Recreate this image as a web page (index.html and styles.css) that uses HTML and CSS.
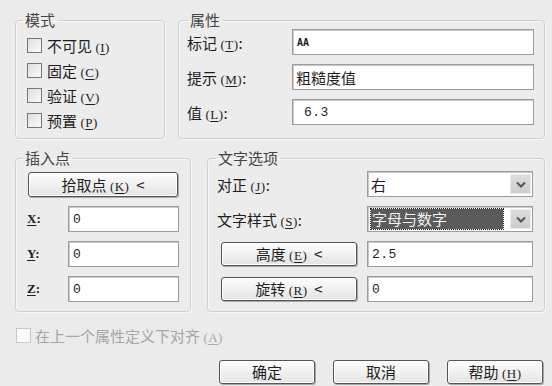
FILE: index.html
```html
<!DOCTYPE html>
<html lang="zh-CN">
<head>
<meta charset="utf-8">
<title>属性定义</title>
<link rel="stylesheet" href="styles.css">
</head>
<body>
<div class="dlg">
  <div class="row top">
    <fieldset class="grp mode">
      <legend>模式</legend>
      <div class="chk"><span class="box"></span><span class="t">不可见 <span class="mn">(<u>I</u>)</span></span></div>
      <div class="chk"><span class="box"></span><span class="t">固定 <span class="mn">(<u>C</u>)</span></span></div>
      <div class="chk"><span class="box"></span><span class="t">验证 <span class="mn">(<u>V</u>)</span></span></div>
      <div class="chk"><span class="box"></span><span class="t">预置 <span class="mn">(<u>P</u>)</span></span></div>
    </fieldset>
    <fieldset class="grp attr">
      <legend>属性</legend>
      <div class="frow"><span class="lbl">标记 <span class="mn">(<u>T</u>)</span>:</span><div class="inp aa">AA</div></div>
      <div class="frow"><span class="lbl">提示 <span class="mn">(<u>M</u>)</span>:</span><div class="inp">粗糙度值</div></div>
      <div class="frow"><span class="lbl">值 <span class="mn">(<u>L</u>)</span>:</span><div class="inp num ind">6.3</div></div>
    </fieldset>
  </div>
  <div class="row mid">
    <fieldset class="grp ins">
      <legend>插入点</legend>
      <div class="btn pick">拾取点 <span class="mn">(<u>K</u>)</span>&nbsp; &lt;</div>
      <div class="frow"><span class="lbl xyz"><u>X</u>:</span><div class="inp num">0</div></div>
      <div class="frow"><span class="lbl xyz"><u>Y</u>:</span><div class="inp num">0</div></div>
      <div class="frow"><span class="lbl xyz"><u>Z</u>:</span><div class="inp num">0</div></div>
    </fieldset>
    <fieldset class="grp txt">
      <legend>文字选项</legend>
      <div class="frow"><span class="lbl wide">对正 <span class="mn">(<u>J</u>)</span>:</span>
        <div class="inp sel"><span class="val">右</span><span class="arr"><svg width="10" height="7" viewBox="0 0 10 7"><path d="M1 1.5 L5 5.5 L9 1.5" fill="none" stroke="#555" stroke-width="2"/></svg></span></div></div>
      <div class="frow"><span class="lbl wide">文字样式 <span class="mn">(<u>S</u>)</span>:</span>
        <div class="inp sel"><span class="val hl">字母与数字</span><span class="arr"><svg width="10" height="7" viewBox="0 0 10 7"><path d="M1 1.5 L5 5.5 L9 1.5" fill="none" stroke="#555" stroke-width="2"/></svg></span></div></div>
      <div class="frow"><div class="lbl wide"><div class="btn sbtn">高度 <span class="mn">(<u>E</u>)</span>&nbsp; &lt;</div></div><div class="inp num">2.5</div></div>
      <div class="frow"><div class="lbl wide"><div class="btn sbtn">旋转 <span class="mn">(<u>R</u>)</span>&nbsp; &lt;</div></div><div class="inp num">0</div></div>
    </fieldset>
  </div>
  <div class="align"><span class="box dis"></span><span class="t">在上一个属性定义下对齐 <span class="mn">(<u>A</u>)</span></span></div>
  <div class="btns">
    <div class="btn act">确定</div>
    <div class="btn act">取消</div>
    <div class="btn act">帮助 <span class="mn">(<u>H</u>)</span></div>
  </div>
</div>
</body>
</html>
```
FILE: styles.css
```css
html, body {
  margin: 0;
  padding: 0;
  background: #ebebeb;
}
body {
  width: 552px;
  height: 386px;
  overflow: hidden;
  font-family: "Noto Sans CJK SC", "Noto Sans", sans-serif;
  font-size: 15px;
  color: #1e1e1e;
}
.dlg {
  padding: 11px 7px 0 15px;
  box-sizing: border-box;
  width: 552px;
}
.row {
  display: flex;
  align-items: stretch;
}
.top { gap: 13px; }
.mid { gap: 16px; margin-top: 10px; }

.grp {
  margin: 0;
  min-width: 0;
  border: 1px solid #cfcfcf;
  border-radius: 4px;
  box-shadow: inset 1px 1px 0 #f7f7f7, 1px 1px 0 #f7f7f7;
  background: #ececec;
}
.grp legend {
  padding: 0 2px;
  margin-left: -4px;
  font-size: 15px;
  line-height: 18px;
  color: #444;
}
.mode { width: 150px; box-sizing: border-box; padding: 4px 6px 5px 11px; }
.attr { flex: 1; padding: 0 10px 12px 8px; display: flex; flex-direction: column; gap: 9px; }
.attr legend { margin-left: 1px; }
.ins { width: 176px; box-sizing: border-box; padding: 5px 11px 8px 11px; display: flex; flex-direction: column; gap: 9px; }
.ins legend { margin-left: -4px; }
.txt { flex: 1; padding: 4px 11px 9px 9px; display: flex; flex-direction: column; gap: 9px; }
.txt legend { margin-left: -1px; }

.mn { font-family: "Liberation Serif", serif; font-size: 13px; letter-spacing: 0.5px; }
.mn u { text-decoration-thickness: 1px; text-underline-offset: 2px; }

.chk {
  height: 25px;
  display: flex;
  align-items: center;
  white-space: nowrap;
}
.t { white-space: pre; }
.box {
  width: 13px;
  height: 13px;
  border: 1px solid #777;
  background: linear-gradient(135deg, #dedede, #fbfbfb);
  margin-right: 5px;
  flex: none;
}
.box.dis { border-color: #c8c8c8; background: #fafafa; margin-right: 4px; }

.frow {
  display: flex;
  align-items: center;
  height: 26px;
}
.lbl { width: 105px; flex: none; white-space: nowrap; }
.lbl.xyz { width: 41px; font-family: "Liberation Serif", serif; font-size: 13px; font-weight: bold; }
.lbl.xyz u { text-underline-offset: 2px; }
.lbl.wide { width: 150px; }

.inp {
  flex: 1;
  height: 26px;
  box-sizing: border-box;
  border: 1px solid #9c9c9c;
  box-shadow: inset 1px 1px 0 #c9c9c9;
  background: #fff;
  display: flex;
  align-items: center;
  padding-left: 3px;
  white-space: nowrap;
}
.inp.aa { font-family: "DejaVu Sans Mono", monospace; font-size: 10px; font-weight: bold; padding-left: 4px; }
.inp.num { font-family: "Liberation Mono", monospace; font-size: 13px; letter-spacing: 0.5px; padding-left: 4px; }
.inp.ind { padding-left: 11px; }
.sel { padding: 0 1px 0 3px; gap: 4px; }
.sel .val { flex: 1; }
.sel .val.hl {
  flex: none;
  width: 131px;
  height: 20px;
  line-height: 20px;
  background: #5b5b5b;
  color: #f2f2f2;
  outline: 1px dotted #222;
  padding-left: 1px;
}
.sel .val.hl + .arr { margin-left: auto; }
.arr {
  width: 21px;
  height: 20px;
  box-sizing: border-box;
  border: 1px solid #ececec;
  background: linear-gradient(#dcdcdc, #cdcdcd);
  display: flex;
  align-items: center;
  justify-content: center;
  flex: none;
}

.btn {
  box-sizing: border-box;
  border: 1px solid #555;
  border-radius: 3px;
  background: linear-gradient(#fdfdfd, #e4e4e4);
  box-shadow: inset 0 0 0 1px #fff, 1px 1px 0 #a8a8a8;
  text-align: center;
  white-space: pre;
}
.pick { height: 25px; line-height: 23px; margin: 0 1px 0 1px; }
.sbtn { width: 136px; height: 24px; line-height: 22px; margin-left: 4px; }

.align {
  display: flex;
  align-items: center;
  height: 18px;
  margin-top: 14px;
  padding-left: 1px;
  color: #a6a6a6;
  white-space: nowrap;
}
.btns {
  display: flex;
  justify-content: flex-end;
  gap: 18px;
  margin-top: 16px;
  padding-right: 2px;
}
.btn.act { width: 96px; height: 24px; line-height: 22px; }
```
